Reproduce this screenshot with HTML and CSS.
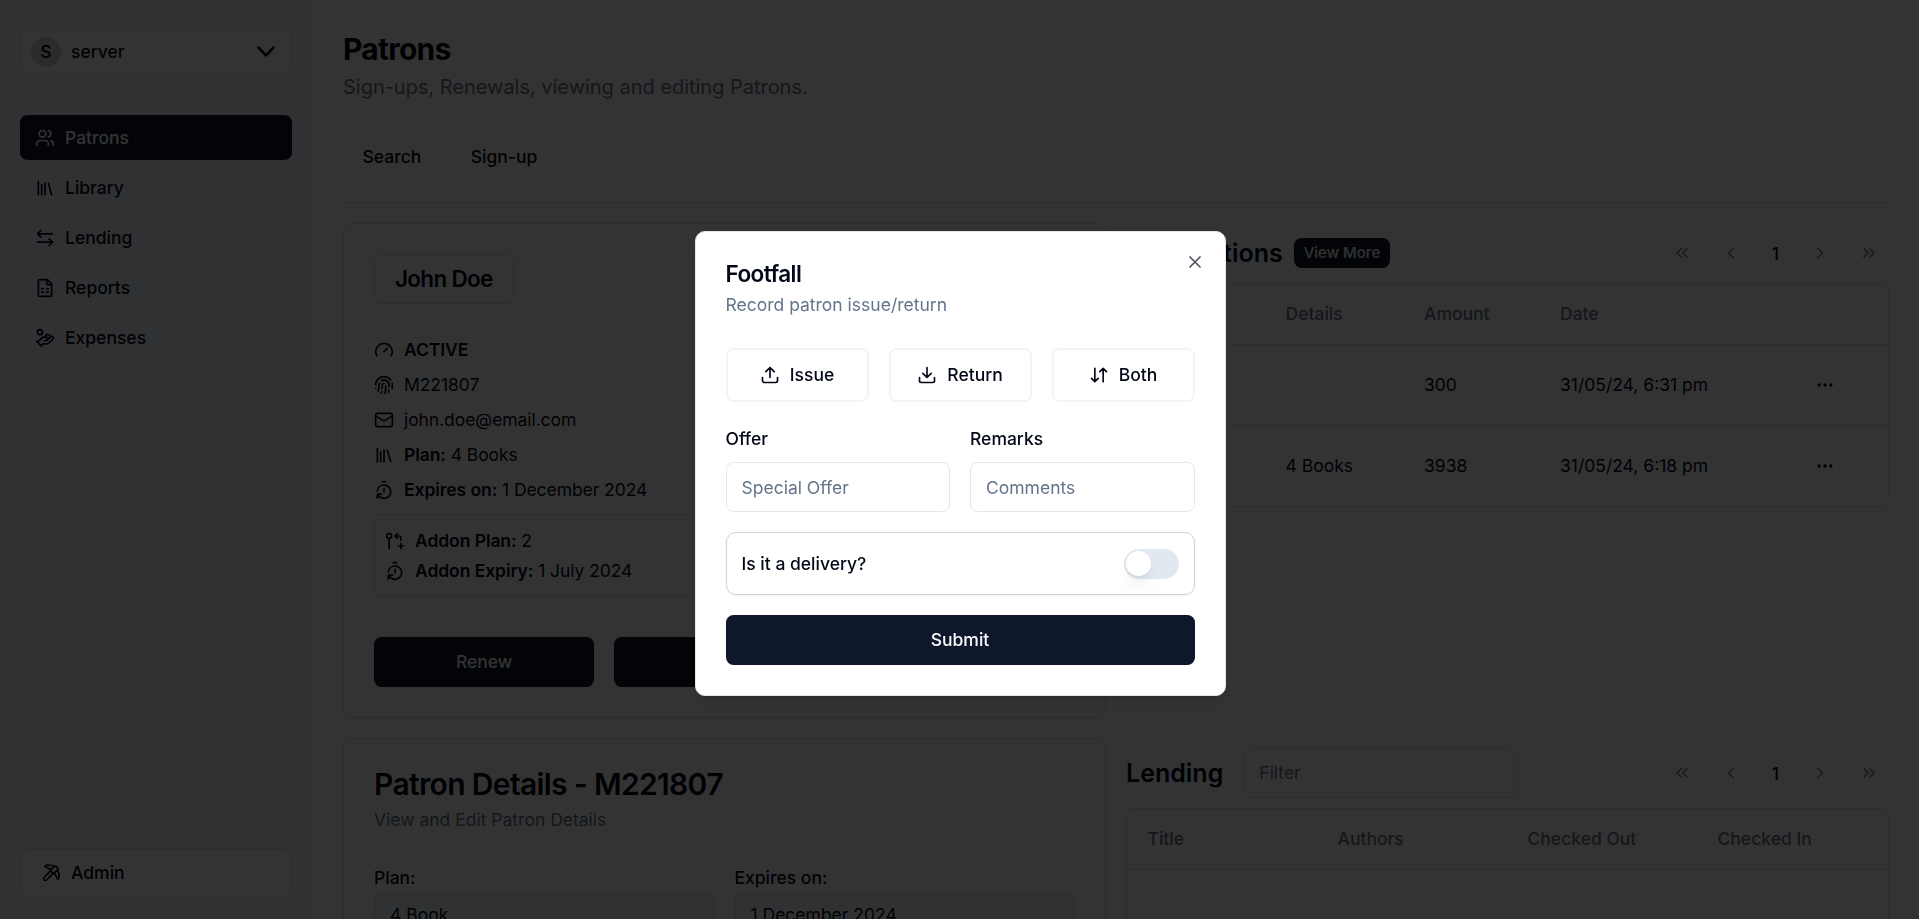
FILE: index.html
```
<!DOCTYPE html>
<html lang="en">
<head>
    <meta charset="UTF-8">
    <meta name="viewport" content="width=device-width, initial-scale=1.0">
    <title>Patrons</title>
    <link rel="stylesheet" href="styles.css">
</head>
<body>
    <svg class="sprite" xmlns="http://www.w3.org/2000/svg">
        <symbol id="users" viewBox="0 0 24 24"><path d="M16 21v-2a4 4 0 0 0-4-4H6a4 4 0 0 0-4 4v2"/><circle cx="9" cy="7" r="4"/><path d="M22 21v-2a4 4 0 0 0-3-3.87M16 3.13a4 4 0 0 1 0 7.75"/></symbol>
        <symbol id="library" viewBox="0 0 24 24"><path d="m16 6 4 14M12 6v14M8 8v12M4 4v16"/></symbol>
        <symbol id="lending" viewBox="0 0 24 24"><path d="M7 3 3 7l4 4M3 7h18M17 13l4 4-4 4M21 17H3"/></symbol>
        <symbol id="reports" viewBox="0 0 24 24"><path d="M15 2H6a2 2 0 0 0-2 2v16a2 2 0 0 0 2 2h12a2 2 0 0 0 2-2V7Z"/><path d="M14 2v4a2 2 0 0 0 2 2h4M8 13h2M14 13h2M8 17h2M14 17h2"/></symbol>
        <symbol id="expenses" viewBox="0 0 24 24"><path d="M11 15h2a2 2 0 1 0 0-4h-3c-.6 0-1.1.2-1.4.6L3 17"/><path d="m7 21 1.6-1.4c.3-.4.8-.6 1.4-.6h4c1.1 0 2.1-.4 2.8-1.2l4.6-4.4a2 2 0 0 0-2.75-2.91l-4.2 3.9M2 16l6 6"/><path d="M12.5 11.200a2.900 2.900 0 1 1 5.300 1"/><circle cx="6" cy="5" r="3"/></symbol>
        <symbol id="pickaxe" viewBox="0 0 24 24"><path d="M14.531 12.469 6.619 20.380a1 1 0 1 1-3-3l7.912-7.912"/><path d="M15.686 4.314A12.500 12.500 0 0 0 5.461 2.958 1 1 0 0 0 5.580 4.710a22 22 0 0 1 6.318 3.393"/><path d="M17.700 3.700a1 1 0 0 0-1.400 0l-4.600 4.600a1 1 0 0 0 0 1.400l2.600 2.600a1 1 0 0 0 1.400 0l4.600-4.600a1 1 0 0 0 0-1.400z"/><path d="M19.686 8.314a12.501 12.501 0 0 1 1.356 10.225 1 1 0 0 1-1.751-.119 22 22 0 0 0-3.393-6.319"/></symbol>
        <symbol id="gauge" viewBox="0 0 24 24"><path d="m12 14 4-4M3.340 19a10 10 0 1 1 17.320 0"/></symbol>
        <symbol id="fingerprint" viewBox="0 0 24 24"><path d="M12 10a2 2 0 0 0-2 2c0 1.020-.1 2.510-.26 4M14 13.120c0 2.380 0 6.380-1 8.880M17.290 21.020c.12-.6.43-2.300.5-3.020M2 12a10 10 0 0 1 18-6M2 16h.01M21.800 16c.2-2 .131-5.354 0-6M5 19.500C5.500 18 6 15 6 12a6 6 0 0 1 .34-2M8.650 22c.21-.66.45-1.320.57-2M9 6.800a6 6 0 0 1 9 5.200v2"/></symbol>
        <symbol id="mail" viewBox="0 0 24 24"><rect width="20" height="16" x="2" y="4" rx="2"/><path d="m22 7-8.970 5.700a1.940 1.940 0 0 1-2.060 0L2 7"/></symbol>
        <symbol id="timer" viewBox="0 0 24 24"><path d="M10 2h4M12 14v-4M4 13a8 8 0 0 1 8-7 8 8 0 1 1-5.300 14L4 17.600M9 17H4v5"/></symbol>
        <symbol id="addon" viewBox="0 0 24 24"><circle cx="5" cy="6" r="3"/><path d="M5 9v12M15 9l-3-3 3-3M12 6h5a2 2 0 0 1 2 2v3M19 15v6M22 18h-6"/></symbol>
        <symbol id="upload" viewBox="0 0 24 24"><path d="M21 15v4a2 2 0 0 1-2 2H5a2 2 0 0 1-2-2v-4M17 8l-5-5-5 5M12 3v12"/></symbol>
        <symbol id="download" viewBox="0 0 24 24"><path d="M21 15v4a2 2 0 0 1-2 2H5a2 2 0 0 1-2-2v-4M7 10l5 5 5-5M12 15V3"/></symbol>
        <symbol id="both" viewBox="0 0 24 24"><path d="m3 16 4 4 4-4M7 20V4M21 8l-4-4-4 4M17 4v16"/></symbol>
        <symbol id="chevron-down" viewBox="0 0 24 24"><path d="m4 7.500 8.500 9 8.500-9"/></symbol>
        <symbol id="left" viewBox="0 0 24 24"><path d="m15 18-6-6 6-6"/></symbol>
        <symbol id="right" viewBox="0 0 24 24"><path d="m9 18 6-6-6-6"/></symbol>
        <symbol id="first" viewBox="0 0 24 24"><path d="m11 17-5-5 5-5M18 17l-5-5 5-5"/></symbol>
        <symbol id="last" viewBox="0 0 24 24"><path d="m6 17 5-5-5-5M13 17l5-5-5-5"/></symbol>
        <symbol id="dots" viewBox="0 0 24 24"><circle cx="12" cy="12" r="1"/><circle cx="19" cy="12" r="1"/><circle cx="5" cy="12" r="1"/></symbol>
        <symbol id="close" viewBox="0 0 24 24"><path d="M18 6 6 18M6 6l12 12"/></symbol>
    </svg>

    <div class="app">
        <aside class="sidebar">
            <div class="server-select">
                <span class="avatar">S</span>
                <span>server</span>
                <svg class="icon chevron"><use href="#chevron-down"/></svg>
            </div>
            <nav class="nav">
                <a class="nav-item active"><svg class="icon"><use href="#users"/></svg>Patrons</a>
                <a class="nav-item"><svg class="icon"><use href="#library"/></svg>Library</a>
                <a class="nav-item"><svg class="icon"><use href="#lending"/></svg>Lending</a>
                <a class="nav-item"><svg class="icon"><use href="#reports"/></svg>Reports</a>
                <a class="nav-item"><svg class="icon"><use href="#expenses"/></svg>Expenses</a>
            </nav>
            <div class="admin"><svg class="icon"><use href="#pickaxe"/></svg>Admin</div>
        </aside>

        <main class="main">
            <header class="page-header">
                <h1>Patrons</h1>
                <p>Sign-ups, Renewals, viewing and editing Patrons.</p>
                <div class="tabs">
                    <a>Search</a>
                    <a>Sign-up</a>
                </div>
            </header>

            <div class="columns">
                <div class="column">
                    <section class="card patron">
                        <h2 class="patron-name">John Doe</h2>
                        <ul class="info">
                            <li><svg class="icon"><use href="#gauge"/></svg><b>ACTIVE</b></li>
                            <li><svg class="icon"><use href="#fingerprint"/></svg>M221807</li>
                            <li><svg class="icon"><use href="#mail"/></svg>john.doe@email.com</li>
                            <li><svg class="icon"><use href="#library"/></svg><span><b>Plan:</b> 4 Books</span></li>
                            <li><svg class="icon"><use href="#timer"/></svg><span><b>Expires on:</b> 1 December 2024</span></li>
                        </ul>
                        <ul class="info addon">
                            <li><svg class="icon"><use href="#addon"/></svg><span><b>Addon Plan:</b> 2</span></li>
                            <li><svg class="icon"><use href="#timer"/></svg><span><b>Addon Expiry:</b> 1 July 2024</span></li>
                        </ul>
                        <div class="actions">
                            <button class="btn">Renew</button>
                            <button class="btn"></button>
                            <button class="btn"></button>
                        </div>
                    </section>

                    <section class="card details">
                        <h2>Patron Details - M221807</h2>
                        <p>View and Edit Patron Details</p>
                        <div class="fields">
                            <label>Plan:<span class="field">4 Book</span></label>
                            <label>Expires on:<span class="field">1 December 2024</span></label>
                        </div>
                    </section>
                </div>

                <div class="column">
                    <section class="transactions">
                        <div class="table-head">
                            <h3>Transactions</h3>
                            <button class="btn btn-small">View More</button>
                            <div class="pager">
                                <span><svg class="icon"><use href="#first"/></svg></span>
                                <span><svg class="icon"><use href="#left"/></svg></span>
                                <b>1</b>
                                <span><svg class="icon"><use href="#right"/></svg></span>
                                <span><svg class="icon"><use href="#last"/></svg></span>
                            </div>
                        </div>
                        <div class="table">
                            <div class="row head"><span></span><span>Details</span><span>Amount</span><span>Date</span><span></span></div>
                            <div class="row"><span></span><span></span><span>300</span><span>31/05/24, 6:31 pm</span><svg class="icon"><use href="#dots"/></svg></div>
                            <div class="row"><span></span><span>4 Books</span><span>3938</span><span>31/05/24, 6:18 pm</span><svg class="icon"><use href="#dots"/></svg></div>
                        </div>
                    </section>

                    <section class="lending">
                        <div class="table-head">
                            <h3>Lending</h3>
                            <div class="input filter">Filter</div>
                            <div class="pager">
                                <span><svg class="icon"><use href="#first"/></svg></span>
                                <span><svg class="icon"><use href="#left"/></svg></span>
                                <b>1</b>
                                <span><svg class="icon"><use href="#right"/></svg></span>
                                <span><svg class="icon"><use href="#last"/></svg></span>
                            </div>
                        </div>
                        <div class="table">
                            <div class="row head"><span>Title</span><span>Authors</span><span>Checked Out</span><span>Checked In</span></div>
                            <div class="row"></div>
                        </div>
                    </section>
                </div>
            </div>
        </main>
    </div>

    <div class="overlay">
        <div class="modal">
            <svg class="icon close"><use href="#close"/></svg>
            <h2>Footfall</h2>
            <p>Record patron issue/return</p>
            <div class="choices">
                <div class="choice"><svg class="icon"><use href="#upload"/></svg>Issue</div>
                <div class="choice"><svg class="icon"><use href="#download"/></svg>Return</div>
                <div class="choice"><svg class="icon"><use href="#both"/></svg>Both</div>
            </div>
            <div class="form-row">
                <label>Offer<span class="input">Special Offer</span></label>
                <label>Remarks<span class="input">Comments</span></label>
            </div>
            <div class="delivery">
                Is it a delivery?
                <span class="switch"></span>
            </div>
            <button class="btn submit">Submit</button>
        </div>
    </div>
</body>
</html>
```
FILE: styles.css
```
* {
    box-sizing: border-box;
    margin: 0;
    padding: 0;
}

body {
    font-family: Inter, "Liberation Sans", sans-serif;
    font-size: 17.5px;
    line-height: 25px;
    color: #020817;
    background: #fff;
    height: 919px;
    overflow: hidden;
}

.sprite {
    display: none;
}

.icon {
    width: 20px;
    height: 20px;
    flex: none;
    fill: none;
    stroke: currentColor;
    stroke-width: 2;
    stroke-linecap: round;
    stroke-linejoin: round;
}

.app {
    display: flex;
    height: 919px;
    overflow: hidden;
}

/* sidebar */
.sidebar {
    width: 312px;
    flex: none;
    display: flex;
    flex-direction: column;
    padding: 29px 20px 22px;
    background: #f1f5f9;
    font-weight: 500;
}

.server-select {
    display: flex;
    align-items: center;
    gap: 10px;
    height: 45px;
    padding: 0 15px 0 10px;
    border: 1px solid #dbe2ea;
    border-radius: 7.5px;
    background: #fff;
}

.avatar {
    width: 30px;
    height: 30px;
    border-radius: 50%;
    background: #d4d4d4;
    text-align: center;
    line-height: 30px;
}

.chevron {
    width: 21px;
    height: 21px;
    margin-left: auto;
    stroke-width: 3;
}

.nav {
    display: flex;
    flex-direction: column;
    gap: 5px;
    margin-top: 20px;
    padding-top: 20px;
    border-top: 1px solid #dbe2ea;
}

.nav-item {
    display: flex;
    align-items: center;
    gap: 10px;
    height: 45px;
    padding: 0 15px;
    border-radius: 7.5px;
}

.nav-item.active {
    background: #0f172a;
    color: #f8fafc;
}

.admin {
    display: flex;
    align-items: center;
    gap: 10px;
    height: 49px;
    margin-top: auto;
    padding: 0 20px;
    border: 1px solid #dbe2ea;
    border-radius: 7.5px;
    background: #fff;
}

/* page */
.main {
    flex: 1;
    min-width: 0;
    padding: 29px 30px 0 31px;
}

.page-header {
    height: 174px;
    border-bottom: 1px solid #dbe2ea;
}

.page-header h1 {
    font-size: 30px;
    line-height: 40px;
    letter-spacing: -0.75px;
}

.page-header p {
    margin-top: 3px;
    font-size: 20px;
    line-height: 30px;
    letter-spacing: -0.02px;
    color: #64748b;
}

.tabs {
    display: flex;
    gap: 49.5px;
    margin-top: 42px;
    padding-left: 19.5px;
    font-weight: 500;
}

.columns {
    display: grid;
    grid-template-columns: repeat(2, minmax(0, 1fr));
    gap: 20px;
    padding-top: 20px;
}

.card {
    padding: 30px;
    border: 1px solid #dbe2ea;
    border-radius: 10px;
    box-shadow: 0 1px 2px rgba(0, 0, 0, 0.05);
}

.patron {
    height: 495px;
}

.patron-name {
    display: inline-block;
    height: 50px;
    padding: 0 20px;
    border: 1px solid #dbe2ea;
    border-radius: 7.5px;
    font-size: 22.5px;
    font-weight: 600;
    line-height: 48px;
    letter-spacing: -0.7px;
}

.info {
    display: flex;
    flex-direction: column;
    gap: 10px;
    margin-top: 33px;
    list-style: none;
    letter-spacing: -0.07px;
}

.info li {
    display: flex;
    align-items: center;
    gap: 10px;
}

.info b {
    font-weight: 600;
}

.addon {
    gap: 5px;
    height: 83px;
    margin-top: 12px;
    padding: 13px 10px;
    border: 1px solid #dbe2ea;
    border-radius: 5px;
}

.actions {
    display: grid;
    grid-template-columns: repeat(3, 1fr);
    gap: 20px;
    margin-top: 40px;
}

.btn {
    height: 50px;
    padding-bottom: 1px;
    border: 0;
    border-radius: 7.5px;
    background: #0f172a;
    color: #f8fafc;
    font: 500 17.5px/25px Inter, sans-serif;
}

.btn-small {
    height: 30px;
    margin-left: 1px;
    padding: 0 10px 1px;
    font-size: 15px;
}

.details {
    height: 400px;
    margin-top: 20px;
}

.details h2 {
    font-size: 30px;
    font-weight: 600;
    line-height: 30px;
    letter-spacing: -0.65px;
}

.details p {
    margin-top: 8px;
    color: #64748b;
}

.fields {
    display: grid;
    grid-template-columns: 1fr 1fr;
    gap: 20px;
    margin-top: 33px;
    font-weight: 500;
}

.field {
    display: block;
    height: 45px;
    margin-top: 2px;
    padding: 9px 15px;
    border: 1px solid #dbe2ea;
    border-radius: 7.5px;
    background: #f1f5f9;
    font-weight: 400;
}

/* tables */
.transactions {
    height: 515px;
}

.table-head {
    display: flex;
    align-items: center;
    gap: 10px;
    height: 60px;
}

.table-head h3 {
    font-size: 25px;
    font-weight: 600;
}

.pager {
    display: flex;
    align-items: center;
    gap: 10px;
    margin-left: auto;
}

.pager span {
    display: flex;
    align-items: center;
    justify-content: center;
    width: 39.5px;
    height: 40px;
    border: 1px solid #f1f5f9;
    border-radius: 7.5px;
    color: #818690;
}

.pager b {
    width: 29px;
    font-weight: 500;
    text-align: center;
}

.table {
    border: 1px solid #dbe2ea;
    border-radius: 7.5px;
}

.row {
    display: grid;
    grid-template-columns: 138px 138.5px 136px 254.5px 1fr;
    align-items: center;
    height: 81px;
    padding: 0 0 1px 20.5px;
}

.row + .row {
    border-top: 1px solid #dbe2ea;
}

.row.head {
    height: 60px;
    color: #64748b;
    font-weight: 500;
}

.lending {
    padding-top: 10px;
}

.lending .table-head {
    height: 50px;
    margin-bottom: 10px;
}

.lending .row {
    grid-template-columns: repeat(4, 190px);
}

/* dialog */
.overlay {
    position: fixed;
    inset: 0;
    display: flex;
    align-items: center;
    justify-content: center;
    padding: 8px 0 0 1px;
    background: rgba(0, 0, 0, 0.8);
}

.modal {
    position: relative;
    width: 531px;
    height: 465px;
    padding: 30px;
    border: 1px solid #e2e8f0;
    border-radius: 10px;
    background: #fff;
    box-shadow: 0 12px 19px -4px rgba(0, 0, 0, 0.1), 0 5px 8px -5px rgba(0, 0, 0, 0.1);
}

.close {
    position: absolute;
    top: 20px;
    right: 20px;
    opacity: 0.7;
}

.modal h2 {
    font-size: 22.5px;
    font-weight: 600;
    line-height: 24px;
    letter-spacing: -0.56px;
}

.modal p {
    margin-top: 6px;
    color: #64748b;
}

.choices {
    display: grid;
    grid-template-columns: repeat(3, 1fr);
    gap: 20px;
    margin-top: 31px;
}

.choice {
    display: flex;
    align-items: center;
    justify-content: center;
    gap: 10px;
    height: 54px;
    padding-bottom: 1px;
    border: 2px solid #f1f5f9;
    border-radius: 7.5px;
    font-weight: 500;
}

.form-row {
    display: grid;
    grid-template-columns: 1fr 1fr;
    gap: 20px;
    margin-top: 24px;
    font-weight: 500;
}

.input {
    display: block;
    height: 50px;
    padding: 12px 15px;
    border: 1px solid #e2e8f0;
    border-radius: 7.5px;
    color: #64748b;
    font-weight: 400;
}

.filter {
    width: 275px;
    margin-left: 10px;
    padding-top: 11px;
    border-color: #dbe2ea;
}

.form-row .input {
    margin-top: 11px;
}

.delivery {
    display: flex;
    align-items: center;
    justify-content: space-between;
    height: 63px;
    margin-top: 20px;
    padding: 0 15px;
    border: 1px solid #cbd5e1;
    border-radius: 10px;
    box-shadow: 0 1px 2px rgba(0, 0, 0, 0.05);
    font-weight: 500;
}

.switch {
    width: 55px;
    height: 30px;
    padding: 2.5px;
    border-radius: 15px;
    background: #e2e8f0;
}

.switch::before {
    content: "";
    display: block;
    width: 25px;
    height: 25px;
    border-radius: 50%;
    background: #fff;
    box-shadow: 0 12px 19px -4px rgba(0, 0, 0, 0.1), 0 5px 8px -5px rgba(0, 0, 0, 0.1);
}

.submit {
    width: 100%;
    margin-top: 20px;
}
```
